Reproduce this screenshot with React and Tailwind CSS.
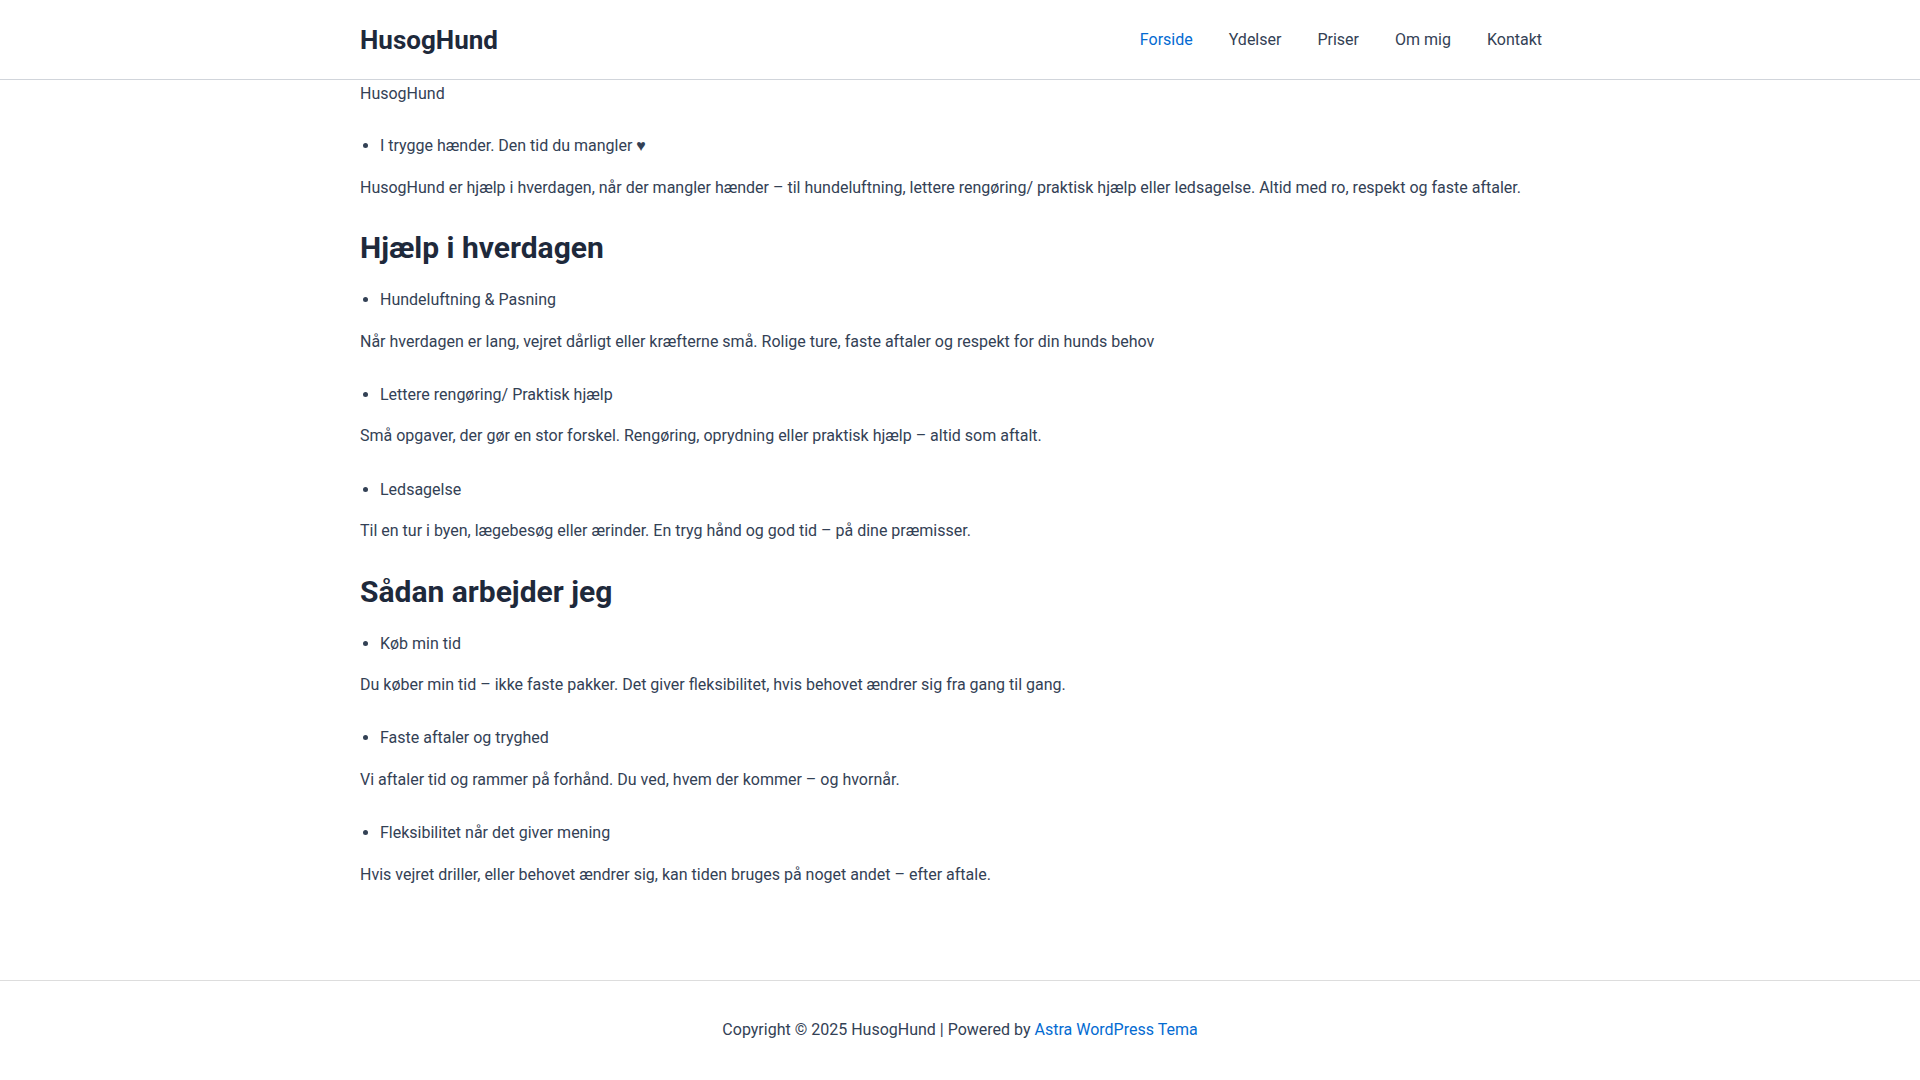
import React from 'react';

const navItems = [
  { label: 'Forside', active: true },
  { label: 'Ydelser' },
  { label: 'Priser' },
  { label: 'Om mig' },
  { label: 'Kontakt' },
];

const Bullet = ({ children }) => (
  <ul className="list-disc pl-5 mb-[15px]">
    <li>{children}</li>
  </ul>
);

const Para = ({ children }) => <p className="mb-[27px]">{children}</p>;

const Heading = ({ children }) => (
  <h2 className="text-[30px] font-bold leading-[1.3] text-[#1e293b] mt-[1px] mb-[20px]">
    {children}
  </h2>
);

const App = () => {
  return (
    <div
      className="min-h-screen bg-white text-[#334155] text-base leading-[26.4px] flex flex-col"
      style={{ fontFamily: 'Roboto, "Liberation Sans", sans-serif' }}
    >
      {/* Header */}
      <header className="h-[80px] border-b border-[#d1d5db]">
        <div className="w-[1200px] mx-auto h-full flex items-center justify-between">
          <div className="text-[26px] font-bold text-[#1e293b] leading-none">HusogHund</div>
          <nav className="flex items-center pt-[2px]">
            {navItems.map((item) => (
              <a
                key={item.label}
                href="#"
                className={
                  item.active
                    ? 'px-[18px] text-[#046bd2]'
                    : 'px-[18px] text-[#334155]'
                }
              >
                {item.label}
              </a>
            ))}
          </nav>
        </div>
      </header>

      {/* Content */}
      <main className="w-[1200px] mx-auto pt-[1px] pb-[65px] flex-1">
        <p className="mb-[26px]">HusogHund</p>
        <Bullet>I trygge hænder. Den tid du mangler ♥</Bullet>
        <Para>
          HusogHund er hjælp i hverdagen, når der mangler hænder – til hundeluftning, lettere
          rengøring/ praktisk hjælp eller ledsagelse. Altid med ro, respekt og faste aftaler.
        </Para>

        <Heading>Hjælp i hverdagen</Heading>
        <Bullet>Hundeluftning &amp; Pasning</Bullet>
        <Para>
          Når hverdagen er lang, vejret dårligt eller kræfterne små. Rolige ture, faste aftaler og
          respekt for din hunds behov
        </Para>
        <Bullet>Lettere rengøring/ Praktisk hjælp</Bullet>
        <Para>
          Små opgaver, der gør en stor forskel. Rengøring, oprydning eller praktisk hjælp – altid
          som aftalt.
        </Para>
        <Bullet>Ledsagelse</Bullet>
        <Para>Til en tur i byen, lægebesøg eller ærinder. En tryg hånd og god tid – på dine præmisser.</Para>

        <Heading>Sådan arbejder jeg</Heading>
        <Bullet>Køb min tid</Bullet>
        <Para>
          Du køber min tid – ikke faste pakker. Det giver fleksibilitet, hvis behovet ændrer sig
          fra gang til gang.
        </Para>
        <Bullet>Faste aftaler og tryghed</Bullet>
        <Para>Vi aftaler tid og rammer på forhånd. Du ved, hvem der kommer – og hvornår.</Para>
        <Bullet>Fleksibilitet når det giver mening</Bullet>
        <Para>Hvis vejret driller, eller behovet ændrer sig, kan tiden bruges på noget andet – efter aftale.</Para>
      </main>

      {/* Footer */}
      <footer className="h-[100px] border-t border-[#dddddd] flex items-center justify-center">
        <p>
          Copyright © 2025 HusogHund | Powered by{' '}
          <a href="#" className="text-[#046bd2]">
            Astra WordPress Tema
          </a>
        </p>
      </footer>
    </div>
  );
};

export default App;
